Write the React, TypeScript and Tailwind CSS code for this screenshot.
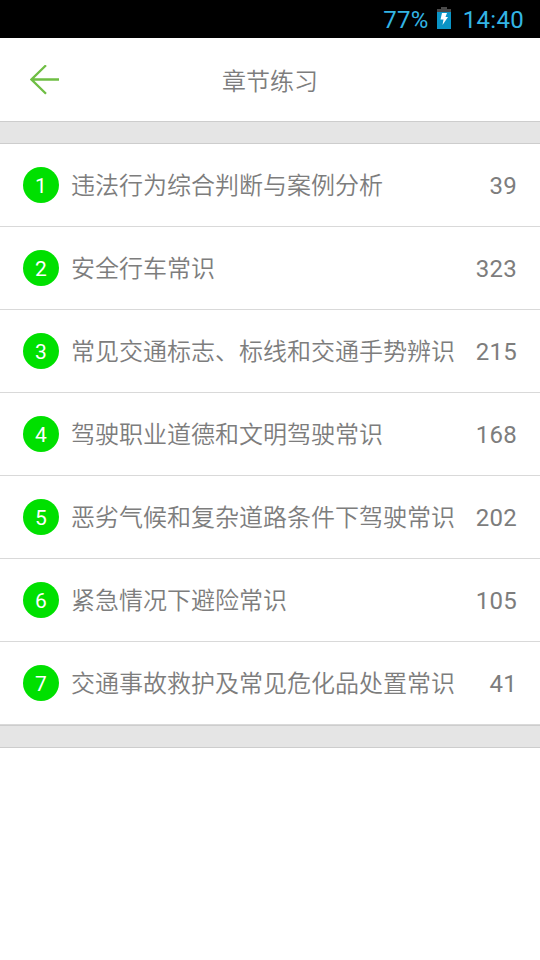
import React from 'react';

const chapters = [
  { id: 1, title: '违法行为综合判断与案例分析', count: 39 },
  { id: 2, title: '安全行车常识', count: 323 },
  { id: 3, title: '常见交通标志、标线和交通手势辨识', count: 215 },
  { id: 4, title: '驾驶职业道德和文明驾驶常识', count: 168 },
  { id: 5, title: '恶劣气候和复杂道路条件下驾驶常识', count: 202 },
  { id: 6, title: '紧急情况下避险常识', count: 105 },
  { id: 7, title: '交通事故救护及常见危化品处置常识', count: 41 },
];

function StatusBar() {
  return (
    <div className="flex h-[38px] items-center justify-end bg-black pr-4 text-2xl text-[#33b5e5]">
      <span className="pt-0.5 tracking-[0.3px]">77%</span>
      <svg className="ml-2 mr-3 mb-0.5" width="14" height="22" viewBox="0 0 14 22">
        <path d="M4 0h6v2h4v3H0V2h4z" fill="#4a4a4a" />
        <path d="M0 5h14v17H0z" fill="#0a94c6" />
        <path d="M5 6h5l-1.5 4H11l-5.5 8 1-5.5H3.5z" fill="#fff" />
      </svg>
      <span className="pt-0.5 tracking-[0.3px]">14:40</span>
    </div>
  );
}

function App() {
  return (
    <div className="min-h-screen bg-white font-[Roboto,'Noto_Sans_CJK_SC',sans-serif] text-[#7d7d7d]">
      <StatusBar />
      <header className="grid h-[83px] grid-cols-[90px_1fr_90px] items-center">
        <button className="flex pl-[30px]">
          <svg width="30" height="30" viewBox="0 0 30 30" fill="none" stroke="#6fbe44" strokeWidth="2.3">
            <path d="M29 14.5H1.5M16 .3L1.5 14.5 16 28.7" />
          </svg>
        </button>
        <h1 className="pt-1 text-center text-2xl font-[350]">章节练习</h1>
      </header>
      <div className="h-[23px] border-y border-[#cdcdcd] bg-[#e5e5e5]" />
      <ul>
        {chapters.map((chapter) => (
          <li
            key={chapter.id}
            className="flex h-[83px] items-center border-b border-[#d9d9d9] px-[23px] text-2xl"
          >
            <span className="flex size-9 items-center justify-center rounded-full bg-[#00e000] pt-px text-[21px] text-white">
              {chapter.id}
            </span>
            <span className="ml-3 flex-1 whitespace-nowrap pt-0.5 font-[350]">{chapter.title}</span>
            <span className="pt-0.5 tracking-[0.3px]">{chapter.count}</span>
          </li>
        ))}
      </ul>
      <div className="h-[23px] border-y border-[#cdcdcd] bg-[#e5e5e5]" />
    </div>
  );
}

export default App;
